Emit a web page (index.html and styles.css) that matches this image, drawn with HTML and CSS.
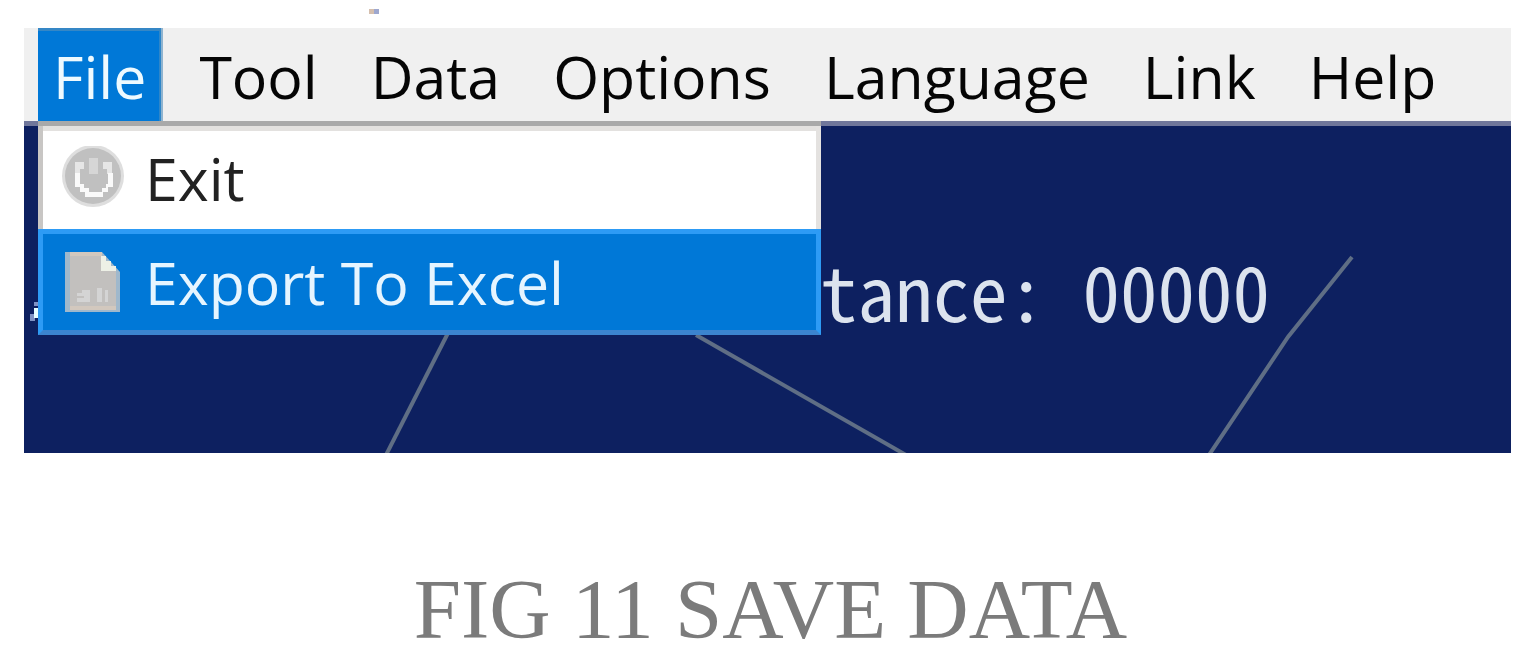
FILE: index.html
```html
<!DOCTYPE html>
<html lang="en">
<head>
<meta charset="utf-8">
<title>Save Data</title>
<link rel="stylesheet" href="styles.css">
</head>
<body>
<figure class="figure">
  <div class="speck"></div>
  <div class="window">
    <nav class="menubar">
      <button class="menu-button menu-button-open" type="button" aria-expanded="true">File</button>
      <button class="menu-button" type="button">Tool</button>
      <button class="menu-button" type="button">Data</button>
      <button class="menu-button" type="button">Options</button>
      <button class="menu-button" type="button">Language</button>
      <button class="menu-button" type="button">Link</button>
      <button class="menu-button" type="button">Help</button>
    </nav>
    <div class="scene">
      <svg class="scene-lines" viewBox="0 0 1487 332" preserveAspectRatio="xMinYMin slice" aria-hidden="true">
        <g fill="none" stroke="#5f6e85" stroke-width="4">
          <path d="M424 212L362 334"/>
          <path d="M672 214L882 334"/>
          <path d="M1328 136L1264 216L1185 334"/>
        </g>
        <path d="M10 181h5v4h-5zM6 193h5v7H6z" fill="#7f92c4"/>
        <path d="M10 187h5v10h-5z" fill="#e8ffff"/>
      </svg>
      <p class="readout">tance: 00000</p>
      <div class="dropdown" role="menu">
        <button class="item" type="button" role="menuitem">
          <svg class="item-icon" viewBox="0 0 64 64" aria-hidden="true">
            <circle cx="32" cy="30" r="31" fill="#dedede"/>
            <circle cx="32" cy="30" r="28" fill="#c0c0c0"/>
            <path d="M14 16h9v7h-4v5h-5zM42 16h9v12h-5v-5h-4z" fill="#e6e6e6"/>
            <path d="M28 12h9v16h-9z" fill="#d6d6d6"/>
            <path d="M14 27h5v11h4v4h5v4h13v-4h4v-4h2V27h5v14h-5v5h-5v5H24v-5h-5v-5h-5z" fill="#fafafa"/>
          </svg>
          <span>Exit</span>
        </button>
        <button class="item item-active" type="button" role="menuitem">
          <svg class="item-icon" viewBox="0 0 64 64" aria-hidden="true">
            <path d="M4 2h37l18 20v40H4z" fill="#9fb8cc"/>
            <path d="M9 2h32v19h14v37H9z" fill="#c2c0be"/>
            <path d="M9 2h32v4H9zM9 56h46v4H9z" fill="#d2c8be"/>
            <path d="M40 6h5v5h5v5h5v5H40z" fill="#edf0e6"/>
            <path d="M16 43h5v-3h8v12H16v-4h7v-2h-7zM36 38h5v14h-5zM44 40h3v12h-3z" fill="#d4d4d4"/>
          </svg>
          <span>Export To Excel</span>
        </button>
      </div>
    </div>
  </div>
  <figcaption class="caption">FIG 11 SAVE DATA</figcaption>
</figure>
</body>
</html>
```
FILE: styles.css
```css
* {
  box-sizing: border-box;
}

body {
  margin: 0;
  background: #fff;
  font-family: "Open Sans", "Noto Sans", sans-serif;
}

.figure {
  margin: 0;
  padding: 9px 12px 0 24px;
}

.speck {
  width: 10px;
  height: 5px;
  margin: 0 0 14px 345px;
  background: linear-gradient(90deg, #d5bfae 50%, #9ea8cf 50%);
}

.window {
  background: #0d2060;
}

.menubar {
  display: flex;
  gap: 23px;
  height: 93px;
  padding-left: 14px;
  background: #f0f0f0;
}

.menu-button {
  padding: 3px 15px 0;
  border: 0;
  background: transparent;
  color: #050505;
  font: inherit;
  font-size: 59px;
  line-height: 90px;
}

.menu-button-open {
  background: #0078d7;
  box-shadow: inset 0 3px #3587c6, inset -2px 0 #2f86c8, 2px 0 #8fb4d0;
  color: #eefaff;
}

.scene {
  position: relative;
  height: 332px;
  padding: 124px 0 0 796px;
  box-shadow: inset 0 5px #70779b;
  overflow: hidden;
}

.scene-lines {
  position: absolute;
  inset: 0;
  width: 100%;
  height: 100%;
}

.readout {
  position: relative;
  margin: 0;
  color: #dce3ee;
  font-family: "Noto Sans Mono CJK SC", "Liberation Mono", monospace;
  font-size: 75px;
  line-height: 90px;
  white-space: pre;
}

.dropdown {
  position: absolute;
  top: 0;
  left: 14px;
  width: 783px;
  border-top: 5px solid #a9a9a9;
  background: #fff;
}

.item {
  display: flex;
  align-items: center;
  gap: 20px;
  width: 100%;
  height: 103px;
  padding: 0 18px;
  border: solid #c8c6c4;
  border-width: 0 5px;
  border-right-color: #e4e2e0;
  background: #fff;
  box-shadow: inset 0 5px #e3e1df;
  color: #222;
  font: inherit;
  font-size: 59px;
  line-height: 80px;
  text-align: left;
}

.item-active {
  height: 106px;
  border: 5px solid #2d9bf5;
  border-bottom-color: #3b84cf;
  background: #0078d7;
  box-shadow: none;
  color: #e6f5ff;
}

.item-icon {
  width: 64px;
  height: 64px;
}

.caption {
  margin-top: 107px;
  padding-left: 6px;
  color: #7b7b7b;
  font-family: "Liberation Serif", serif;
  font-size: 85px;
  line-height: 98px;
  text-align: center;
}
```
